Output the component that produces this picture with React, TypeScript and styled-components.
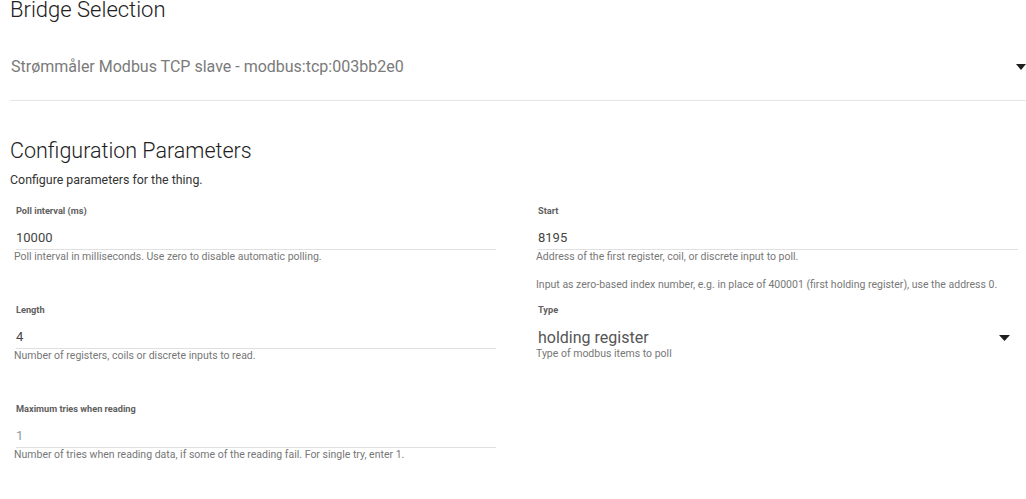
import React from "react";
import styled, { createGlobalStyle } from "styled-components";

const GlobalStyle = createGlobalStyle`
  html, body { margin: 0; padding: 0; background: #ffffff; }
  body { font-family: Roboto, "Noto Sans", "Liberation Sans", sans-serif; overflow: hidden; }
  * { box-sizing: border-box; }
`;

const Page = styled.div`
  width: 1026px;
  height: 499px;
  padding-left: 10px;
  overflow: hidden;
  color: #333333;
`;

const SectionTitle = styled.h2<{ $top?: number; $size?: number }>`
  margin: ${(p) => p.$top ?? 0}px 0 0 0;
  font-size: ${(p) => p.$size ?? 22}px;
  font-weight: 300;
  line-height: 20px;
  color: #212121;
  letter-spacing: 0;
`;

const BridgeRow = styled.div`
  display: flex;
  align-items: center;
  justify-content: space-between;
  padding: 36px 0 22px 1px;
  border-bottom: 1px solid #e6e6e6;
`;

const BridgeText = styled.span`
  font-size: 16px;
  line-height: 22px;
  color: #7a7a7a;
`;

const Caret = styled.svg<{ $w: number }>`
  width: ${(p) => p.$w}px;
  height: 6px;
  flex: none;
  display: block;
`;

const Intro = styled.p`
  margin: 12px 0 0 0;
  font-size: 12.4px;
  line-height: 14px;
  color: #333333;
`;

const Grid = styled.div`
  display: grid;
  grid-template-columns: 482px 482px;
  column-gap: 40px;
  margin: 18px 0 0 4px;
`;

const Field = styled.div`
  display: flex;
  flex-direction: column;
  min-height: 99px;
`;

const Label = styled.div`
  font-size: 9.2px;
  font-weight: 700;
  line-height: 12px;
  color: #606060;
  padding-left: 2px;
`;

const Value = styled.div<{ $muted?: boolean }>`
  margin: 12px 0 0 2px;
  padding: 0 0 2px 0;
  font-size: 13px;
  line-height: 18px;
  color: ${(p) => (p.$muted ? "#8f9aa3" : "#444444")};
  border-bottom: 1px solid #e0e0e0;
`;

const SelectBox = styled.div`
  margin-top: 12px;
  display: flex;
  align-items: center;
  justify-content: space-between;
  padding: 0 8px 0 2px;
  height: 20px;
`;

const SelectText = styled.span`
  font-size: 16px;
  line-height: 20px;
  color: #555555;
`;

const Help = styled.p<{ $gap?: number }>`
  margin: ${(p) => p.$gap ?? 1}px 0 0 0;
  font-size: 10.5px;
  line-height: 12px;
  color: #777777;
`;

const DownCaret = ({ w }: { w: number }) => (
  <Caret $w={w} viewBox={`0 0 ${w} 6`}>
    <polygon points={`0,0 ${w},0 ${w / 2},6`} fill="#1f1f1f" />
  </Caret>
);

export default function App() {
  return (
    <>
      <GlobalStyle />
      <Page>
        <SectionTitle>Bridge Selection</SectionTitle>
        <BridgeRow>
          <BridgeText>Strømmåler Modbus TCP slave - modbus:tcp:003bb2e0</BridgeText>
          <DownCaret w={10} />
        </BridgeRow>

        <SectionTitle $top={40} $size={21.5}>Configuration Parameters</SectionTitle>
        <Intro>Configure parameters for the thing.</Intro>

        <Grid>
          <Field>
            <Label>Poll interval (ms)</Label>
            <Value>10000</Value>
            <Help>Poll interval in milliseconds. Use zero to disable automatic polling.</Help>
          </Field>
          <Field>
            <Label>Start</Label>
            <Value>8195</Value>
            <Help>Address of the first register, coil, or discrete input to poll.</Help>
            <Help $gap={16}>
              Input as zero-based index number, e.g. in place of 400001 (first holding register), use the address 0.
            </Help>
          </Field>

          <Field>
            <Label>Length</Label>
            <Value>4</Value>
            <Help>Number of registers, coils or discrete inputs to read.</Help>
          </Field>
          <Field>
            <Label>Type</Label>
            <SelectBox>
              <SelectText>holding register</SelectText>
              <DownCaret w={11} />
            </SelectBox>
            <Help $gap={0}>Type of modbus items to poll</Help>
          </Field>

          <Field>
            <Label>Maximum tries when reading</Label>
            <Value $muted>1</Value>
            <Help>Number of tries when reading data, if some of the reading fail. For single try, enter 1.</Help>
          </Field>
        </Grid>
      </Page>
    </>
  );
}
